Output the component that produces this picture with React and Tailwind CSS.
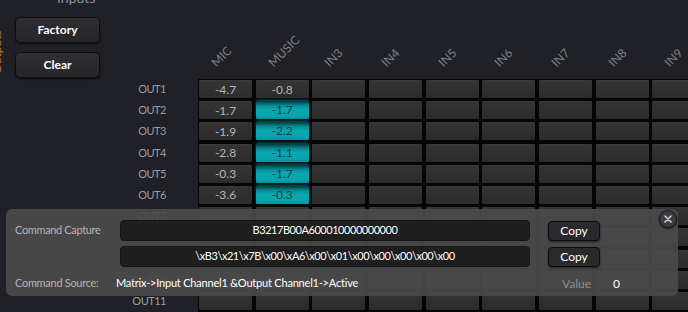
import React from "react";

const cols = ["MIC", "MUSIC", "IN3", "IN4", "IN5", "IN6", "IN7", "IN8", "IN9", "IN10"];
const rows = Array.from({ length: 12 }, (_, i) => `OUT${i + 1}`);
const data = {
  0: [["-4.7", false], ["-0.8", false]],
  1: [["-1.7", false], ["-1.7", true]],
  2: [["-1.9", false], ["-2.2", true]],
  3: [["-2.8", false], ["-1.1", true]],
  4: [["-0.3", false], ["-1.7", true]],
  5: [["-3.6", false], ["-0.3", true]],
};

function Cell({ v, active }) {
  if (active) {
    return (
      <div className="w-[53px] h-[18px] shrink-0 rounded-[1px] bg-[linear-gradient(to_bottom,#03393d_0%,#078a93_25%,#0aa7b1_45%,#0aa4ae_80%,#08939c_100%)] shadow-[0_-1px_3px_rgba(10,170,180,0.55)] flex items-center justify-center text-[12px] text-[#153c40] leading-none">
        {v}
      </div>
    );
  }
  return (
    <div className="w-[53px] h-[18px] shrink-0 rounded-[1px] bg-[linear-gradient(to_bottom,#343434,#2c2c2c)] border-t border-[#3a3a3a] flex items-center justify-center text-[12px] text-[#b4b4b4] leading-none">
      {v}
    </div>
  );
}

export default function App() {
  return (
    <div className="w-[688px] h-[312px] overflow-hidden bg-[#1f2127] relative font-['Lato','Noto_Sans',sans-serif]">
      <div className="absolute left-[-25px] top-[46px] -rotate-90 text-[12px] text-[#b57a36] leading-[12px] origin-center">
        Outputs
      </div>
      <div className="flex">
        <div className="w-[198px] shrink-0 flex flex-col">
          <div className="h-[79px] flex flex-col pl-[15px]">
            <div className="-mt-[10px] ml-[42px] h-[16px] text-[14px] leading-[16px] text-[#8a93a4]">Inputs</div>
            <button className="mt-[11px] w-[85px] h-[26px] rounded-[5px] bg-[linear-gradient(to_bottom,#2e2e33,#26262a)] border border-[#0e0e10] shadow-[0_1px_2px_rgba(0,0,0,0.6)] text-white text-[12px] font-bold">
              Factory
            </button>
            <button className="mt-[9px] w-[85px] h-[26px] rounded-[5px] bg-[linear-gradient(to_bottom,#2e2e33,#26262a)] border border-[#0e0e10] shadow-[0_1px_2px_rgba(0,0,0,0.6)] text-white text-[12px] font-bold">
              Clear
            </button>
          </div>
          <div className="flex flex-col gap-y-[3.2px] pt-[1px]">
            {rows.map((r) => (
              <div key={r} className="h-[18px] pr-[32px] text-right text-[11px] tracking-[-0.5px] leading-[18px] text-[#9c9c9c]">
                {r}
              </div>
            ))}
          </div>
        </div>
        <div className="flex-1 min-w-0">
          <div className="h-[79px] flex gap-x-[3.67px] pl-[1px]">
            {cols.map((c) => (
              <div key={c} className="w-[53px] shrink-0 relative">
                <div className="absolute left-[19px] bottom-[10px] origin-bottom-left -rotate-45 text-[12px] leading-none text-[#7d8087] whitespace-nowrap">
                  {c}
                </div>
              </div>
            ))}
          </div>
          <div className="bg-[#050505] pt-[1px] pl-[1px] flex flex-col gap-y-[3.2px] w-[600px]">
            {rows.map((r, ri) => (
              <div key={r} className="flex gap-x-[3.67px]">
                {cols.map((c, ci) => {
                  const d = data[ri] && data[ri][ci];
                  return <Cell key={c} v={d ? d[0] : ""} active={d ? d[1] : false} />;
                })}
              </div>
            ))}
          </div>
        </div>
      </div>

      <div className="absolute left-[6px] top-[209px] w-[672px] h-[87px] rounded-[6px] bg-[#4a4a4a]/[0.93] pl-[9px] pt-[11px] flex flex-col text-[11px]">
        <div className="flex items-center h-[21px]">
          <div className="w-[105px] text-[#b4b4b4] tracking-[-0.35px]">Command Capture</div>
          <div className="w-[410px] h-[21px] rounded-[4px] bg-[#1f1f1f] border border-[#151515] flex items-center justify-center text-white text-[11px] tracking-[-0.45px]">
            B3217B00A600010000000000
          </div>
          <button className="ml-[18px] w-[52px] h-[20px] rounded-[4px] bg-[#29292e] border border-[#0c0c0e] shadow-[0_1px_2px_rgba(0,0,0,0.5)] text-white text-[12px]">
            Copy
          </button>
        </div>
        <div className="flex items-center h-[21px] mt-[5px]">
          <div className="w-[105px]"></div>
          <div className="w-[410px] h-[21px] rounded-[4px] bg-[#1f1f1f] border border-[#151515] flex items-center justify-center text-white text-[11px] tracking-[-0.45px]">
            {"\\xB3\\x21\\x7B\\x00\\xA6\\x00\\x01\\x00\\x00\\x00\\x00\\x00"}
          </div>
          <button className="ml-[18px] w-[52px] h-[20px] rounded-[4px] bg-[#29292e] border border-[#0c0c0e] shadow-[0_1px_2px_rgba(0,0,0,0.5)] text-white text-[12px]">
            Copy
          </button>
        </div>
        <div className="flex items-center h-[17px] mt-[8px]">
          <div className="w-[101px] text-[#b4b4b4] tracking-[-0.3px]">Command Source:</div>
          <div className="w-[446px] text-white tracking-[-0.2px]">Matrix-&gt;Input Channel1 &amp;Output Channel1-&gt;Active</div>
          <div className="w-[51px] text-[#8e8e8e] text-[12px]">Value</div>
          <div className="text-white text-[12px]">0</div>
        </div>
        <div className="absolute right-[1px] top-[1px] w-[18px] h-[18px] rounded-full bg-[#3a3a40] border border-[#1a1a1c] shadow-[0_1px_2px_rgba(0,0,0,0.6)] flex items-center justify-center">
          <svg width="8" height="8" viewBox="0 0 8 8">
            <path d="M1 1L7 7M7 1L1 7" stroke="#d0d0d0" strokeWidth="1.6" strokeLinecap="round" />
          </svg>
        </div>
      </div>
    </div>
  );
}
